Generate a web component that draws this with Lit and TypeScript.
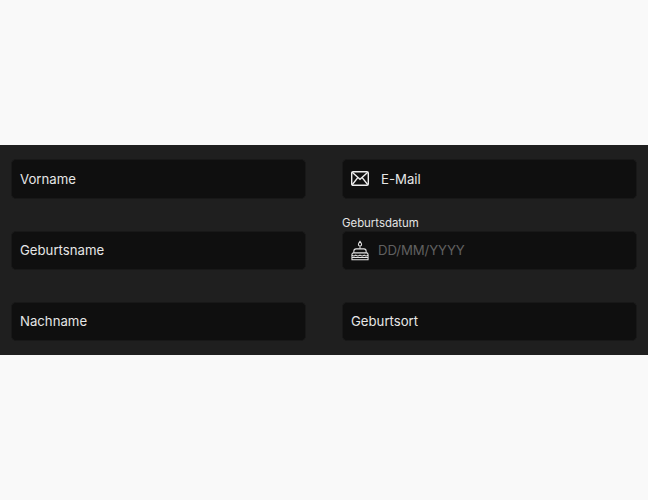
import { LitElement, html, css } from "lit";
import { customElement } from "lit/decorators.js";

const mail = html`<svg class="mail" width="18" height="15" viewBox="0 0 18 15" fill="none" stroke="#ececec" stroke-width="1.4"><rect x=".7" y=".7" width="16.6" height="13.6" rx="1.4"/><path d="M1.2 1.2 9 8.2l7.8-7M1.2 13.8l5.6-7.2M16.8 13.8l-5.6-7.2"/></svg>`;
const cake = html`<svg class="cake" width="19" height="21" viewBox="0 0 19 21" fill="none" stroke="#e4e4e4" stroke-width="1.1"><path d="M9.5 .8c1.2 1.5 1.7 2.4 1.7 3.3a1.7 1.7 0 0 1-3.4 0c0-.9.5-1.8 1.7-3.3Z"/><path d="M9.5 6v2.6"/><path d="M3 13v-1.8a2.4 2.4 0 0 1 2.4-2.4h8.2a2.4 2.4 0 0 1 2.4 2.4V13"/><path d="M1 20.2v-5.6a1.6 1.6 0 0 1 1.6-1.6h13.8a1.6 1.6 0 0 1 1.6 1.6v5.6Z"/><path d="M1 15.4c1.3 1.2 2.7 1.2 4 0 1.3 1.2 3 1.2 4.5 0 1.5 1.2 3.2 1.2 4.5 0 1.3 1.2 2.7 1.2 4 0M1 17.8h17"/></svg>`;

@customElement("app-root")
export class AppRoot extends LitElement {
  static styles = css`
    :host { display: block; height: 500px; background: #f9f9f9; font-family: "Inter", "Noto Sans", sans-serif; }
    .spacer { height: 145px; }
    .panel { height: 210px; box-sizing: border-box; background: #1f1f1f; padding: 14.4px 11px 0; display: grid; grid-template-columns: 295px 295px; column-gap: 36px; row-gap: 32.25px; grid-auto-rows: 39px; }
    .cell { position: relative; }
    .field { box-sizing: border-box; height: 39.5px; padding: 0 0 .5px 8px; background: #0f0f0f; border: 1px solid #181818; border-radius: 5px; display: flex; align-items: center; color: #e6e6e6; font-size: 13.2px; font-weight: 400; }
    .icon { display: flex; width: 18px; margin-right: 12px; }
    .date .icon { margin-right: 9px; }
    .ph { color: #606060; letter-spacing: -0.1px; }
    .label { position: absolute; left: 0; top: -15px; font-size: 11.4px; line-height: 14px; color: #e4e4e4; }
  `;
  render() {
    return html`<div class="spacer"></div>
      <div class="panel">
        <div class="cell"><div class="field">Vorname</div></div>
        <div class="cell"><div class="field"><span class="icon">${mail}</span>E-Mail</div></div>
        <div class="cell"><div class="field">Geburtsname</div></div>
        <div class="cell"><span class="label">Geburtsdatum</span><div class="field date"><span class="icon">${cake}</span><span class="ph">DD/MM/YYYY</span></div></div>
        <div class="cell"><div class="field">Nachname</div></div>
        <div class="cell"><div class="field">Geburtsort</div></div>
      </div>`;
  }
}
